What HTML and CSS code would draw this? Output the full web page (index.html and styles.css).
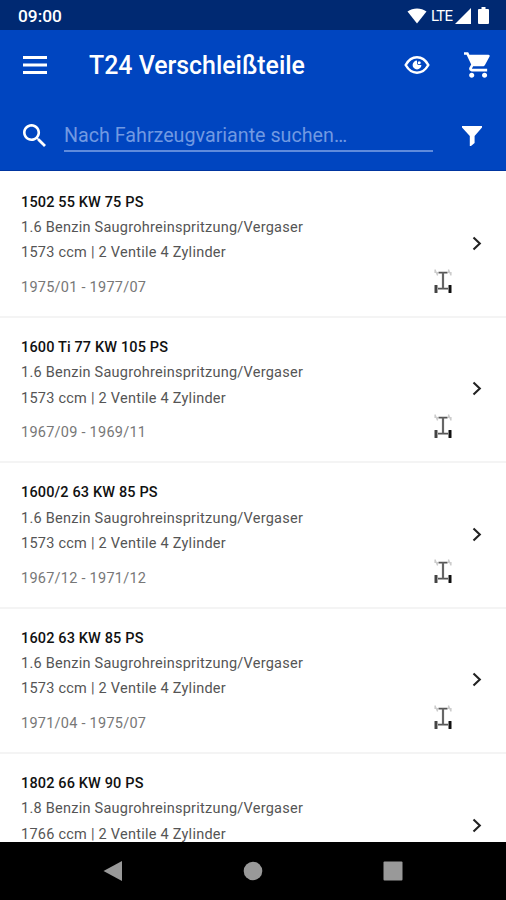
FILE: index.html
```
<!DOCTYPE html>
<html lang="de">
<head>
    <meta charset="UTF-8">
    <meta name="viewport" content="width=device-width, initial-scale=1.0">
    <title>T24 Verschleißteile</title>
    <link rel="stylesheet" href="styles.css">
</head>
<body>
    <!-- shared icons of the list rows -->
    <svg class="sprite">
        <symbol id="chevron" viewBox="0 0 10 15">
            <path d="M1.500 1.500L7.800 7.500L1.500 13.500" fill="none" stroke="#222" stroke-width="2.100"/>
        </symbol>
        <symbol id="axle" viewBox="0 0 18 24">
            <path d="M1 0.500l2.500 6M1 0.500v3.500M3.500 3v3.500M17 6.500l-2.500-6M14.500 0.500v3.500M17 3v3.500" fill="none" stroke="#ccc" stroke-width="1.200"/>
            <path d="M4.500 3.700h9M4 19.700h10" fill="none" stroke="#555" stroke-width="1.700"/>
            <path d="M9 3.500v16" stroke="#666" stroke-width="2.200"/>
            <rect x="0.500" y="16" width="3" height="8" rx="0.500" fill="#444"/>
            <rect x="14.500" y="16" width="3" height="8" rx="0.500" fill="#111"/>
        </symbol>
    </svg>

    <div class="status_bar">
        <span class="clock">09:00</span>
        <svg class="wifi" viewBox="0 0 20 16"><path d="M0.500 3.500C6-.6 14-.6 19.500 3.500L10 15.500z"/></svg>
        <span class="network">LTE</span>
        <svg class="signal" viewBox="0 0 16 16"><path d="M0 16L16 0v16z"/></svg>
        <svg class="battery" viewBox="0 0 11 17"><path d="M3.500 0h4v2H10a1 1 0 0 1 1 1v13a1 1 0 0 1-1 1H1a1 1 0 0 1-1-1V3a1 1 0 0 1 1-1h2.500z"/></svg>
    </div>

    <header class="app_header">
        <div class="toolbar">
            <svg class="menu" viewBox="0 0 24 18"><path d="M0 0h24v3H0zM0 7.500h24v3H0zM0 15h24v3H0z"/></svg>
            <h1 class="title">T24 Verschleißteile</h1>
            <svg class="eye" viewBox="0 0 26 20">
                <path d="M1.700 10Q6 2.300 13 2.300T24.300 10Q20 17.700 13 17.700T1.700 10z" fill="none" stroke="#fff" stroke-width="2.500"/>
                <path d="M13 5.600a4.400 4.400 0 1 0 4.400 4.400h-2.700A1.700 1.700 0 0 1 13 8.300z"/>
                <circle cx="15.200" cy="7.800" r="1.500"/>
            </svg>
            <svg class="cart" viewBox="1 2 21 20"><path d="M7 18c-1.100 0-1.990.9-1.990 2S5.900 22 7 22s2-.9 2-2-.9-2-2-2zM1 2v2h2l3.600 7.590-1.350 2.450c-.16.280-.25.610-.25.960 0 1.100.9 2 2 2h12v-2H7.420c-.14 0-.25-.11-.25-.25l.03-.12.900-1.630h7.450c.75 0 1.410-.41 1.750-1.030l3.580-6.490A1.003 1.003 0 0 0 20 4H5.210l-.94-2H1zm16 16c-1.100 0-1.990.9-1.990 2s.89 2 1.990 2 2-.9 2-2-.9-2-2-2z"/></svg>
        </div>
        <div class="search">
            <svg class="magnifier" viewBox="3 3 17.500 17.500"><path d="M15.500 14h-.79l-.28-.27C15.410 12.590 16 11.110 16 9.500 16 5.910 13.090 3 9.500 3S3 5.910 3 9.500 5.910 16 9.500 16c1.610 0 3.090-.59 4.230-1.570l.27.28v.79l5 4.990L20.490 19l-4.990-5zm-6 0C7.010 14 5 11.990 5 9.500S7.010 5 9.500 5 14 7.010 14 9.500 11.990 14 9.500 14z"/></svg>
            <div class="search_field">Nach Fahrzeugvariante suchen…</div>
            <svg class="filter" viewBox="0 0 20 20"><path d="M0 0h20v1.600L12.600 10v7L9 20H7.800V10L0 1.600z"/></svg>
        </div>
    </header>

    <main class="list">
        <div class="row">
            <div class="info">
                <h2>1502 55 KW 75 PS</h2>
                <p>1.6 Benzin Saugrohreinspritzung/Vergaser</p>
                <p>1573 ccm | 2 Ventile 4 Zylinder</p>
                <p class="years">1975/01 - 1977/07</p>
            </div>
            <svg class="axle"><use href="#axle"/></svg>
            <svg class="chevron"><use href="#chevron"/></svg>
        </div>
        <div class="row">
            <div class="info">
                <h2>1600 Ti 77 KW 105 PS</h2>
                <p>1.6 Benzin Saugrohreinspritzung/Vergaser</p>
                <p>1573 ccm | 2 Ventile 4 Zylinder</p>
                <p class="years">1967/09 - 1969/11</p>
            </div>
            <svg class="axle"><use href="#axle"/></svg>
            <svg class="chevron"><use href="#chevron"/></svg>
        </div>
        <div class="row">
            <div class="info">
                <h2>1600/2 63 KW 85 PS</h2>
                <p>1.6 Benzin Saugrohreinspritzung/Vergaser</p>
                <p>1573 ccm | 2 Ventile 4 Zylinder</p>
                <p class="years">1967/12 - 1971/12</p>
            </div>
            <svg class="axle"><use href="#axle"/></svg>
            <svg class="chevron"><use href="#chevron"/></svg>
        </div>
        <div class="row">
            <div class="info">
                <h2>1602 63 KW 85 PS</h2>
                <p>1.6 Benzin Saugrohreinspritzung/Vergaser</p>
                <p>1573 ccm | 2 Ventile 4 Zylinder</p>
                <p class="years">1971/04 - 1975/07</p>
            </div>
            <svg class="axle"><use href="#axle"/></svg>
            <svg class="chevron"><use href="#chevron"/></svg>
        </div>
        <!-- last row runs under the navigation bar -->
        <div class="row">
            <div class="info">
                <h2>1802 66 KW 90 PS</h2>
                <p>1.8 Benzin Saugrohreinspritzung/Vergaser</p>
                <p>1766 ccm | 2 Ventile 4 Zylinder</p>
            </div>
            <svg class="chevron"><use href="#chevron"/></svg>
        </div>
    </main>

    <nav class="nav_bar">
        <svg viewBox="0 0 20 20"><path d="M0.500 10L19 0v20z"/></svg>
        <svg viewBox="0 0 20 20"><circle cx="10" cy="10" r="9.300"/></svg>
        <svg viewBox="0 0 20 20"><rect x="0.500" y="0.500" width="19" height="19" rx="1"/></svg>
    </nav>
</body>
</html>
```
FILE: styles.css
```
* {
    box-sizing: border-box;
}

body {
    margin: 0;
    height: 900px;
    display: flex;
    flex-direction: column;
    overflow: hidden;
    background-color: #fff;
    font-family: Roboto, "Liberation Sans", sans-serif;
}

svg {
    display: block;
    flex: none;
    fill: #fff;
}

h1, h2, p {
    margin: 0;
}

.sprite {
    position: absolute;
    width: 0;
    height: 0;
}

/* status bar */
.status_bar {
    flex: none;
    display: flex;
    align-items: center;
    height: 30px;
    padding: 1px 17px 0 18px;
    background-color: #002972;
    color: #fff;
}

.clock {
    flex: 1;
    padding-top: 1px;
    font-size: 17.3px;
    font-weight: 500;
}

.wifi {
    width: 20px;
    height: 16px;
    margin-right: 4px;
}

.network {
    width: 24px;
    padding-top: 1px;
    font-size: 15px;
    letter-spacing: -0.8px;
}

.signal {
    width: 16px;
    height: 16px;
    margin-right: 7px;
}

.battery {
    width: 11px;
    height: 17px;
}

/* header */
.app_header {
    flex: none;
    height: 141px;
    background-color: #0045c0;
    border-bottom: 1px solid #0035a0;
}

.toolbar {
    display: flex;
    align-items: center;
    height: 69px;
    padding: 0 15px 0 23px;
}

.menu {
    width: 24px;
    height: 18px;
    margin-right: 42px;
}

.title {
    flex: 1;
    padding-top: 2px;
    color: #fff;
    font-size: 24.9px;
    font-weight: 500;
}

.eye {
    width: 26px;
    height: 20px;
    margin-right: 34px;
}

.cart {
    width: 27px;
    height: 26px;
}

.search {
    display: flex;
    align-items: center;
    height: 72px;
    padding: 1px 23px 0;
}

.magnifier {
    width: 23px;
    height: 23px;
    margin-right: 18px;
}

.search_field {
    width: 369px;
    height: 33px;
    margin-right: 29px;
    border-bottom: 2px solid #5f8bdc;
    color: #7199e2;
    font-size: 19.7px;
    line-height: 33px;
}

.filter {
    width: 20px;
    height: 20px;
}

/* list */
.list {
    flex: 1;
    min-height: 0;
    overflow: hidden;
    padding-top: 1.6px;
}

.row {
    display: flex;
    height: 145.4px;
    padding: 17px 24px 0 21px;
    border-bottom: 2px solid #f4f4f4;
}

.info {
    flex: 1;
    color: #555;
    font-size: 14.5px;
    line-height: 25.3px;
    letter-spacing: 0.25px;
}

.info h2 {
    color: #111;
    font-size: 14.5px;
    font-weight: 500;
    letter-spacing: 0.14px;
}

.info .years {
    margin-top: 9.5px;
    color: #777;
}

.axle {
    width: 18px;
    height: 24px;
    margin: 79px 20px 0 0;
}

.chevron {
    width: 10px;
    height: 15px;
    margin-top: 46.4px;
}

/* navigation bar */
.nav_bar {
    flex: none;
    display: flex;
    justify-content: center;
    gap: 120px;
    height: 58px;
    padding-top: 19px;
    background-color: #000;
}

.nav_bar svg {
    width: 20px;
    height: 20px;
    fill: #999;
}
```
